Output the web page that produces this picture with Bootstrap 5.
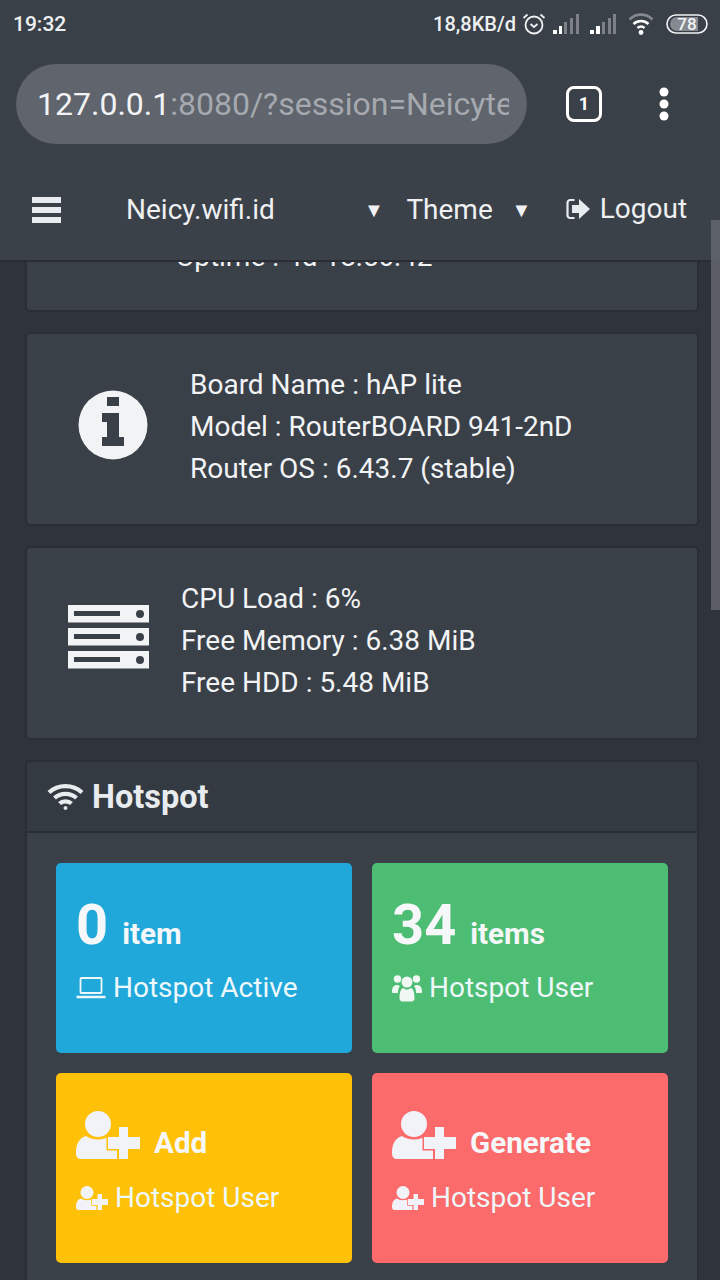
<!DOCTYPE html>
<html lang="en">
<head>
<meta charset="utf-8">
<title>Neicy.wifi.id</title>
<link href="https://cdn.jsdelivr.net/npm/bootstrap@5.3.0/dist/css/bootstrap.min.css" rel="stylesheet">
<style>
html,body{margin:0;height:1280px;overflow:hidden;background:#2f343b}
body{font-family:Roboto,"Liberation Sans",sans-serif;color:#f1f3f5;font-size:28px;line-height:42px}
.shell{position:relative;width:720px;height:1280px;overflow:hidden;display:flex;flex-direction:column}
.statusrow{height:48px;background:#3a4048;padding:0 12px 0 13px;font-weight:500;font-size:20px;line-height:48px;color:#eef0f2;flex:none}
.statusrow svg{display:block;flex:none}
.clocktext{font-size:21px}
.speed{margin-right:6px}
.sig1{margin-left:7px}
.sig2{margin-left:10px}
.sig3{margin-left:11px}
.sig4{margin-left:12px}
.toolrow{height:112px;background:#3a4048;padding:16px 0 0 16px;flex:none}
.urlpill{width:511px;height:80px;border-radius:40px;background:#5f646d;padding:0 18px 0 21px;font-size:32px;line-height:80px;color:#f3f4f5;flex:none}
.urlclip{overflow:hidden;white-space:nowrap;width:472px}
.urlclip span{color:#a6a9af}
.tabcount{width:36px;height:36px;border:3.5px solid #fff;border-radius:8px;margin:22px 0 0 39px;font-size:18px;font-weight:700;line-height:29px;text-align:center;color:#fff;flex:none}
.dotmenu{margin:23px 0 0 57px;flex:none}
.topbar{height:102px;background:#3b4149;border-bottom:2px solid #2a2e34;padding:0;flex:none;display:flex;align-items:center;color:#eef0f2;font-size:28px;line-height:40px;flex-wrap:nowrap;justify-content:flex-start;position:relative;z-index:2}
.burger{margin-left:32px;width:29px;flex:none}
.brandname{margin-left:65px;width:238px;flex:none}
.tri{font-size:20px;flex:none;width:15.4px}
.themeword{margin-left:27px;width:105px;flex:none}
.logoutword{margin-left:39px;display:flex;align-items:center;gap:8px;flex:none;margin-top:-3px}
.pagebody{flex:1;min-height:0;overflow:hidden;padding:0 21px 0 25px}
.panel{background:#3a4048;border:2px solid #2a2e34;border-radius:5px;color:#f1f3f5;margin-bottom:20px}
.panel-cut{height:214px;margin-top:-164px}
.panel-stat{height:194px;flex-direction:row;align-items:center}
.panel-stat p{margin:0}
.stat-text{margin-top:-4px}
.icon-info{width:70px;margin-left:51px;margin-right:42px;flex:none;margin-top:-9px}
.icon-server{width:81px;margin-left:41px;margin-right:32px;flex:none;margin-top:-13px}
.cut-text{padding:136px 0 0 149px;white-space:nowrap;line-height:42px}
.panel-hot{margin-bottom:0;height:700px}
.hot-head{height:71px;background:#343a41;border-bottom:2px solid #2a2e34;padding:0 0 0 20px;font-size:32.5px;font-weight:700;color:#e9ecef;line-height:66px;border-radius:3px 3px 0 0}
.hot-head svg{flex:none}
.hot-body{padding:30px 29px 0 29px}
.tile-grid{display:grid;grid-template-columns:296px 296px;gap:20px;grid-auto-rows:190px}
.tile{border-radius:5px;padding:32px 0 0 20px;color:#fff;overflow:hidden}
.t-blue{background:#20a8db}
.t-green{background:#4dbd74}
.t-yellow{background:#ffc107}
.t-red{background:#fb6b6b}
.tile-top{height:60px;font-weight:700;font-size:29.6px;line-height:60px;color:#f5f7f9;white-space:nowrap}
.tile-top b{font-size:56px;font-weight:700;margin-right:14px;line-height:60px}
.tile-top svg{flex:none}
.topgap{gap:14px}
.word-low{margin-top:16px}
.tile-sub{margin-top:12px;line-height:42px;font-size:28px;color:#eef8fb;white-space:nowrap;gap:7px}
.tile-sub svg{flex:none}
.t-yellow .plusmark{stroke:#ffc107}
.t-red .plusmark{stroke:#fb6b6b}
.plusmark{stroke-width:3;paint-order:stroke}
.railthumb{position:absolute;right:0;top:220px;width:9px;height:390px;background:#63676d;z-index:3;opacity:.85}
</style>
</head>
<body>
<div class="shell">
  <div class="statusrow d-flex align-items-center">
    <span class="clocktext">19:32</span>
    <span class="ms-auto speed">18,8KB/d</span>
    <svg width="24" height="24" viewBox="0 0 24 24" fill="none" stroke="#eef0f2" stroke-width="1.8"><circle cx="12" cy="13" r="8.5"/><path d="M8.5 12l3.5 3 3.5-3M1.500 6l4-3.500M22.500 6l-4-3.500"/></svg>
    <svg class="sig1" width="27" height="20" viewBox="0 0 27 20"><path fill="#fff" d="M0 16h4v4H0zM6 12h3v8H6z"/><path fill="#7d8187" d="M11 8h3v12h-3zM17 4h3v16h-3zM23 0h3v20h-3z"/></svg>
    <svg class="sig2" width="27" height="20" viewBox="0 0 27 20"><path fill="#fff" d="M0 16h4v4H0zM6 12h4v8H6z"/><path fill="#7d8187" d="M12 8h3v12h-3zM18 4h3v16h-3zM23 0h3v20h-3z"/></svg>
    <svg class="sig3" width="26" height="24" viewBox="0 0 26 24" fill="none"><path stroke="#85898f" stroke-width="2.600" d="M1.500 7.500c6.500-6.500 16.500-6.500 23 0"/><path stroke="#fff" stroke-width="2.600" d="M5.500 12c4.500-4 10.500-4 15 0M9.500 16c2-1.800 5-1.800 7 0"/><circle cx="13" cy="20.500" r="2.400" fill="#fff"/></svg>
    <svg class="sig4" width="42" height="20" viewBox="0 0 42 20"><rect x="1" y="1" width="40" height="18" rx="9" fill="none" stroke="#f2f3f4" stroke-width="1.600"/><path fill="#858990" d="M4 10a7 7 0 0 1 7-7h21v14H11a7 7 0 0 1-7-7z"/><text x="21" y="16" text-anchor="middle" font-family="Roboto,sans-serif" font-size="17" font-weight="500" fill="#f2f3f4">78</text></svg>
  </div>
  <div class="toolrow d-flex align-items-start">
    <div class="urlpill"><div class="urlclip">127.0.0.1<span>:8080/?session=Neicyte</span></div></div>
    <div class="tabcount">1</div>
    <svg class="dotmenu" width="10" height="34" viewBox="0 0 10 34" fill="#fff"><circle cx="5" cy="5" r="4.500"/><circle cx="5" cy="17" r="4.500"/><circle cx="5" cy="29" r="4.500"/></svg>
  </div>
  <nav class="navbar topbar">
    <svg class="burger" height="26" viewBox="0 0 29 26" fill="#e9ecef"><path d="M0 0h29v6H0zM0 10h29v6H0zM0 20h29v6H0z"/></svg>
    <span class="brandname">Neicy.wifi.id</span>
    <span class="tri">▼</span>
    <span class="themeword">Theme</span>
    <span class="tri">▼</span>
    <span class="logoutword">
      <svg width="26" height="22" viewBox="0 0 26 22"><path fill="none" stroke="#e9ecef" stroke-width="2.200" d="M8.500 2H4.500A2.800 2.800 0 0 0 1.500 5v12a2.800 2.800 0 0 0 3 3h4"/><path fill="#e9ecef" d="M6 7h7V1l11 10-11 10v-6H6z"/></svg>
      Logout
    </span>
  </nav>
  <main class="pagebody">
    <div class="card panel panel-cut"><div class="cut-text">Uptime : 4d 18:50:42</div></div>
    <div class="card panel panel-stat">
      <svg class="icon-info" viewBox="0 0 70 70"><circle cx="35" cy="35" r="34.500" fill="#f1f3f5"/><path fill="#3a4048" d="M29 7h12v9H29zM24 23h17v24h5v9H24v-9h5V32h-5z"/></svg>
      <div class="stat-text"><p>Board Name : hAP lite</p><p>Model : RouterBOARD 941-2nD</p><p>Router OS : 6.43.7 (stable)</p></div>
    </div>
    <div class="card panel panel-stat">
      <svg class="icon-server" viewBox="0 0 81 64"><g fill="#f1f3f5"><rect width="81" height="17.500"/><rect y="23" width="81" height="17.500"/><rect y="46" width="81" height="17.500"/></g><g fill="#3a4048"><path d="M6 6h46v5H6zM6 29h46v5H6zM6 52h46v5H6z"/><circle cx="72" cy="9" r="4"/><circle cx="72" cy="32" r="4"/><circle cx="72" cy="55" r="4"/></g></svg>
      <div class="stat-text"><p>CPU Load : 6%</p><p>Free Memory : 6.38 MiB</p><p>Free HDD : 5.48 MiB</p></div>
    </div>
    <div class="card panel panel-hot">
      <div class="hot-head d-flex align-items-center gap-2">
        <svg width="37" height="28" viewBox="0 0 37 28" fill="none" stroke="#e9ecef" stroke-width="4.200"><path d="M2 9.500c9-8.500 24-8.500 33 0M7.500 15c6-5.500 16-5.500 22 0M12.500 20.500c3-2.800 9-2.800 12 0"/><circle cx="18.500" cy="25" r="1.500" fill="#e9ecef" stroke-width="1"/></svg>
        <span>Hotspot</span>
      </div>
      <div class="hot-body">
        <div class="tile-grid">
          <div class="tile t-blue">
            <div class="tile-top"><b>0</b>item</div>
            <div class="tile-sub d-flex align-items-center">
              <svg width="30" height="22" viewBox="0 0 30 22" fill="none" stroke="#eef8fb" stroke-width="1.800"><rect x="4.500" y="1" width="21" height="15" rx="1"/><path stroke-width="2.600" d="M.5 20h29"/></svg>
              <span>Hotspot Active</span>
            </div>
          </div>
          <div class="tile t-green">
            <div class="tile-top"><b>34</b>items</div>
            <div class="tile-sub d-flex align-items-center">
              <svg width="30" height="28" viewBox="0 0 30 28" fill="#f1f8f4"><circle cx="5.500" cy="5" r="3.700"/><circle cx="24.500" cy="5" r="3.700"/><circle cx="15" cy="8" r="5.500"/><path d="M0 18c0-5 2-7 5-7 1 0 2 .5 3 1-1.500 1.500-2 4-2 7H1.500C.5 19 0 18.800 0 18zM30 18c0-5-2-7-5-7-1 0-2 .5-3 1 1.500 1.500 2 4 2 7h4.500c1 0 1.500-.2 1.500-1zM7.500 24c0-7 2-10 4-10 1 1 2 1.500 3.500 1.500S17.500 15 18.500 14c2 0 4 3 4 10 0 2-1 3.500-3 3.500h-9c-2 0-3-1.500-3-3.500z"/></svg>
              <span>Hotspot User</span>
            </div>
          </div>
          <div class="tile t-yellow">
            <div class="tile-top d-flex align-items-center topgap">
              <svg width="64" height="48" viewBox="0 0 64 48" fill="#f1f3f8"><circle cx="22" cy="13" r="13"/><path d="M0 42c0-9 3-15 10-17 3 2 7 3.500 12 3.500s9-1.500 12-3.500c3 1 5 3 7 6v17H5c-3 0-5-2-5-6z"/><path class="plusmark" d="M43 16h9v10h12v12H52v10h-9V38H32V26h11z"/></svg>
              <span class="word-low">Add</span>
            </div>
            <div class="tile-sub d-flex align-items-center">
              <svg width="32" height="24" viewBox="0 0 64 48" fill="#f1f3f8"><circle cx="22" cy="13" r="13"/><path d="M0 42c0-9 3-15 10-17 3 2 7 3.500 12 3.500s9-1.500 12-3.500c3 1 5 3 7 6v17H5c-3 0-5-2-5-6z"/><path class="plusmark" d="M43 16h9v10h12v12H52v10h-9V38H32V26h11z"/></svg>
              <span>Hotspot User</span>
            </div>
          </div>
          <div class="tile t-red">
            <div class="tile-top d-flex align-items-center topgap">
              <svg width="64" height="48" viewBox="0 0 64 48" fill="#f1f3f8"><circle cx="22" cy="13" r="13"/><path d="M0 42c0-9 3-15 10-17 3 2 7 3.500 12 3.500s9-1.500 12-3.500c3 1 5 3 7 6v17H5c-3 0-5-2-5-6z"/><path class="plusmark" d="M43 16h9v10h12v12H52v10h-9V38H32V26h11z"/></svg>
              <span class="word-low">Generate</span>
            </div>
            <div class="tile-sub d-flex align-items-center">
              <svg width="32" height="24" viewBox="0 0 64 48" fill="#f1f3f8"><circle cx="22" cy="13" r="13"/><path d="M0 42c0-9 3-15 10-17 3 2 7 3.500 12 3.500s9-1.500 12-3.500c3 1 5 3 7 6v17H5c-3 0-5-2-5-6z"/><path class="plusmark" d="M43 16h9v10h12v12H52v10h-9V38H32V26h11z"/></svg>
              <span>Hotspot User</span>
            </div>
          </div>
        </div>
      </div>
    </div>
  </main>
  <div class="railthumb"></div>
</div>
<script src="https://cdn.jsdelivr.net/npm/bootstrap@5.3.0/dist/js/bootstrap.bundle.min.js"></script>
</body>
</html>
